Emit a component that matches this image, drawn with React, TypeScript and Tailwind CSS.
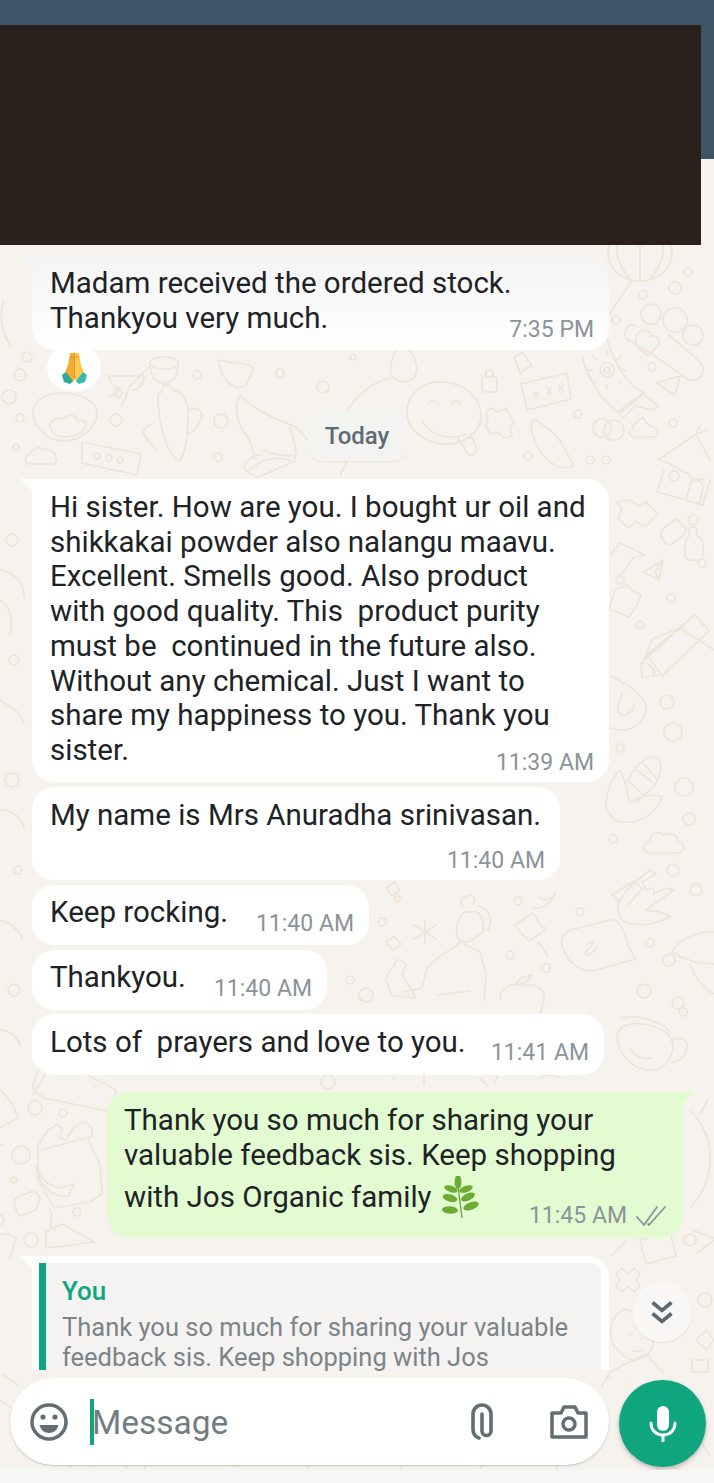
import type { ReactNode } from "react";

const dots: [number, number, number][] = [
  [643, 295, 4], [675, 288, 6], [688, 272, 4], [616, 320, 4], [651, 314, 10], [675, 320, 12], [693, 335, 10],
  [652, 367, 4], [673, 423, 4], [606, 460, 4], [614, 430, 10], [20, 375, 6], [27, 357, 5], [9, 397, 7], [20, 418, 4],
  [118, 393, 4], [197, 375, 4], [116, 420, 6], [221, 421, 7], [16, 447, 3], [218, 457, 4], [353, 357, 3], [280, 373, 4],
  [323, 387, 6], [578, 414, 4], [602, 428, 9], [528, 456, 4], [590, 460, 4], [620, 748, 4], [667, 702, 7],
  [673, 732, 9], [684, 787, 9], [689, 819, 6], [613, 839, 4], [673, 870, 6], [696, 890, 6], [650, 943, 4], [669, 960, 6],
  [644, 991, 7], [678, 1003, 6], [518, 901, 4], [580, 912, 4], [382, 922, 4], [510, 955, 4], [546, 968, 4],
  [350, 980, 4], [366, 995, 7], [35, 1108, 7], [63, 1113, 4], [21, 1155, 9],
  [77, 1212, 4], [31, 1240, 7], [14, 1180, 3], [683, 1012, 4], [693, 520, 5],
  [620, 580, 4], [702, 563, 4], [640, 625, 4], [671, 598, 4], [12, 540, 6], [14, 660, 5], [12, 780, 7],
  [18, 870, 4], [14, 990, 6], [690, 1240, 6], [705, 1300, 7], [328, 1082, 7],
];

function Doodles() {
  return (
    <svg className="absolute inset-0 h-full w-full" viewBox="0 0 714 1483" fill="none" stroke="#eee4d8" strokeWidth="1.7" strokeLinecap="round" strokeLinejoin="round">
      {dots.map((d, i) => (
        <circle key={i} cx={d[0]} cy={d[1]} r={d[2]} />
      ))}

      {/* lantern, capsule and heart */}
      <ellipse cx="640" cy="254" rx="32" ry="27" />
      <path d="M618 235c-4 16 0 30 12 44M640 228v52M662 235c4 16 0 30-12 44M632 281l-18 26-6 10" />
      <path d="M636 326c-10-4-14 8-8 14l24 14 34 24c14 8 24-8 12-18l-30-26" />
      <path d="M640 332c6-4 11 0 11 4 6-2 10 4 7 10l-10 10-10-8c-4-6-3-14 2-16z" />
      {/* sun and brush */}
      <path d="M607 340c10 28 22 48 37 52l-26 20c-12-8-30-30-36-56" />
      <circle cx="607" cy="370" r="7" /><circle cx="607" cy="370" r="3" />
      <path d="M607 355v-4M607 385v4M592 370h-4M622 370h4M596 359l-3-3M618 381l3 3M618 359l3-3M596 381l-3 3" />
      <path d="M619 414l24-20 16 12-6 4-18-4-12 12z" />
      {/* triangle, swirl, house */}
      <path d="M656 383l24-7-5 19z" />
      <path d="M643 417c-6 6-10 6-10 12-6 1-4 8 2 8h18c6 0 7-8 0-10-4-2-8-4-10-10z" />
      <path d="M658 460l38-26 14 26M664 470l-7 22 46 13 7-25M660 460c4 4 8 0 10 4s8 2 10 6 8 0 10 6 8 2 14 4" />
      <circle cx="674" cy="476" r="5" /><path d="M686 500l5-18c6-4 12 0 12 6l-4 18" />
      <path d="M697 433c0-4 2-6 4-8M697 433c4 0 8-2 10-4" />
      <path d="M628 500l12 5 6-3 12 12-12 12-10-4-8 6-10-10 4-10-6-6z" />
      <path d="M664 528l10-8c4-2 6 2 6 4l4 2c4 4 2 6-2 10l-10 8c-6 2-8-2-10-6-2-2-2-6 2-10z" />
      <path d="M689 530c0-4 8-4 8 0v6c4 2 6 4 6 8v12c0 6-18 6-18 0v-12c0-4 2-6 4-8z" />
      <path d="M655 572l8-12-4 20z M644 572l19-12M644 572l15 8" />
      <path d="M615 590l12-5 6 6 8 4-4 10-8 12-20-8z" />
      <path d="M650 640l30-12 34 22M652 640l-8 20M680 628l-36 32" />
      <path d="M610 555l10-12 25 12-12 3-14 20" />
      {/* pencil, flame, corn */}
      <path d="M642 677l-1-14 6-8 48-40 14 16-46 44zM641 663c6 0 16 4 12 14M647 655l16 22" />
      <path d="M610 676c14 6 28 14 36 28 2 14-10 26-24 26-6 0-14-2-18-6M622 692c0 8-6 12-4 20 6 6 16 0 16-8" />
      <path d="M628 780l8-14 14-10 8 2c6 8 2 22-8 32l-14 12M634 768l18 14M642 762l14 16M628 780l16 16" />
      <path d="M620 770c-10 10-14 24-14 38l8 12 8 2c18 2 34-8 40-26-12-2-22 0-32 6-4-12-4-22-10-32z" />
      {/* cloud and rock hand */}
      <path d="M650 853c-8 0-8-10 0-12 0-8 10-10 14-6 6-4 14 0 14 6 8 2 8 12-2 12z" />
      <path d="M650 870c-8 6-22 16-30 30-6 12 0 24 14 24 14 2 28-2 36-8l-10-4-14-2 28-20-8-2-12 6 0-6-8 2-4-8 14-8z" />
      {/* taco, cup, note */}
      <path d="M672 952c8-14 24-20 42-20M672 952c12 8 28 12 42 12M690 964c6 14 12 24 24 30" />
      <path d="M617 1038c0-12 12-16 26-14 16 2 30 10 30 22 0 14-12 26-26 24-14-2-28-14-30-32z" />
      <path d="M622 1018c10-4 40 2 48 14M673 1040c8-4 16 0 14 8-2 10-8 14-16 14" />
      <path d="M630 1048c6 10 14 12 22 10" />
      <path d="M562 945c-2-8 4-14 12-16l40-10c8 4 12 18 14 26l8 14-44 12c-16 0-26-12-30-26z" />
      <path d="M586 945c6-6 8-2 6 0s-8 8-6 10 6-2 12-8" />
      {/* pin, apple, girl, asterisk */}
      <path d="M515 925l18-12 4 4c0 6 4 10 10 12l-18 12-6-6z M538 942l10 14" />
      <path d="M500 998c0-10 10-16 22-12 12-4 22 2 22 12 0 8-4 16-8 20M516 985c2-4 4-8 8-8 2 0 8-2 8-2-2 4-6 8-14 10" />
      <path d="M465 912c-6 4-10 14-8 24 2 6 8 6 12 6l14-10c2-6 0-16-6-20zM463 906c-4-4-2-10 4-8 2-6 10-2 6 6M478 906c10 2 16 12 10 24" />
      <path d="M460 942c-8 10-30 16-34 30l-4 16-20 4M464 944l16 8 6 22-2 26M438 995l32-4" />
      <path d="M425 920v24M414 925l22 14M414 939l22-14" />
      <path d="M386 888l8-6 6 8-8 6zM394 898l4-3 3 4-4 3zM386 942l8-6 7 8-8 6z" />
      <path d="M396 960c-2 8-8 12-10 20l6 16 24 2-14-24 2-6c4-2 2-8-8-8z" />
      <path d="M539 897c6 6 14 2 16-4-2 10-14 18-22 14" />
      <path d="M400 1058c-4 8-8 14-6 22M424 1070v14M480 1078l8 8M500 1070l-6 14M540 1078c6-4 14-4 20 0" />
      <path d="M612 895l22-14 8 8-14 16M620 902l-8-8" />
      {/* band of doodles around Today */}
      <path d="M120 388c-6 0-10-6-12-12h36c0 8-6 14-12 14M120 388l-4 6-6 3" />
      <ellipse cx="164" cy="363" rx="14" ry="6" /><path d="M150 363c0 10 4 20 14 20s14-8 14-20M150 366l-20 20-8 20" />
      <path d="M218 360l4 14 6 8 8 6 10-2 8-18-8-4-16-2zM240 395c8 10 30 22 56 32l22 24" />
      <path d="M240 395c-6 12-4 26 6 40 6 8 8 16 8 24M290 427c4 14 8 24 4 34-12 6-30 14-38 16l-12-8c0-8 10-14 16-14M262 450c10 4 18 6 30 6" />
      <path d="M33 413c0-14 14-20 30-20s34 8 34 20c0 14-16 28-33 28s-31-14-31-28z" />
      <path d="M50 425c2-6 8-8 14-6 6-6 12-4 14 2 4-2 8 0 8 4 0 6-10 12-22 12-8 0-14-6-14-12z" />
      <path d="M158 395c4-4 6-6 6-12 4 2 8 4 10 8 8 0 14 8 14 22 0 20-2 38-8 48-6-2-10-8-14-18-6-16-8-36-8-48z" />
      <path d="M190 410c6-4 12 0 12 6-2 8-6 14-14 18M152 425c-6 0-10 6-8 10 4 6 10 12 14 16" />
      <path d="M82 442l59 12-4 21-55-12z" />
      <circle cx="97" cy="456" r="3" /><circle cx="109" cy="458" r="3" /><circle cx="120" cy="460" r="3" />
      <path d="M30 464c-6 0-6-8 0-10 2-6 10-8 14-4 6-2 12 2 12 8 2 4-2 6-6 6z" />
      <path d="M407 412c0-18 16-32 38-30 20 2 36 16 36 34 0 18-18 28-34 28-22 0-40-14-40-32z" />
      <path d="M429 404a5 5 0 0 1 9 0M452 404a5 5 0 0 1 9 0M422 420c6 14 26 22 44 14M458 438l10 16c6 4 10-2 8-8l-6-12" />
      <path d="M521 384l46-11 4 26-44 11z" />
      <path d="M534 392l4 6M538 392l-4 6M547 388l4 6M551 388l-4 6M559 385l4 6M563 385l-4 6" />
      <rect x="482" y="377" width="15" height="15" rx="3" /><path d="M486 377v-4c0-4 7-4 7 0v4" />
      <path d="M514 358l8-6 6 8 4 6-6 2-6 6-2-8z" />
      <path d="M490 408l8 4 8-4 4 8 4 6-4 6 2 8-8 2-6-6-8 2-4-8 2-6-2-6z" />
      <path d="M534 420c8 2 24 16 28 24l12 22-8 2c-14 0-30-16-34-36-2-8 0-12 2-12z" />
      <path d="M400 340c8 8 20 20 16 34-4 10-18 10-24 2-4-8 0-18 8-36zM344 420c6-20 24-36 46-42M330 455l26-10-16 30" />
      <path d="M250 470c10-10 24-14 40-10" />
      {/* lower left */}
      <path d="M38 1070l40 0 38 20-4 22-68-14-12-10zM45 1075l-12 20M100 1082h1M94 1086h1" />
      <path d="M48 1130l10-6 4 6-2 6c0 4 6 6 8 0l4-6c8-10 14-8 18-4 4 4 2 10-2 14l12 24 2 30-12 8-36 6-16-28 0-34z" />
      <path d="M42 1150l50-14" />
      <path d="M36 1166c2 16 14 32 32 30l6-12-14 4c-12-2-20-10-24-22z" />
      <path d="M16 1198l14-6c6-2 8 2 10 6l-4 12-16 6c-4-2-4-6-4-8-2-4-2-8 0-10z" />
      <path d="M50 1208l2 10-2 8 6 4" />
      <path d="M46 1232l16-8 32 18-30 4-18 2z M0 1234c8 0 14 2 16 4l-6 20" />
      <path d="M0 1090c8 6 14 16 18 28l-18 10M0 1145l4 0M0 1215c6 2 4 8 0 10" />
      <path d="M4 300c-6 16-2 30 6 46M0 570c14 2 24 12 24 28M0 600c10 6 14 20 10 34M0 700c8 6 20 10 24 24M0 810c10 0 22 6 24 18M0 920c8 2 18 8 22 18M0 1030c8 0 18 6 20 16" />
      {/* lower right */}
      <path d="M622 1268l6 6 6-6 6 6-4 6 4 6-6 6-6-6-6 6-6-6 4-6-4-6z" />
      <path d="M622 1310c-12 8-14 24-8 36l6 6c8 10 20 10 28 2 8-8 6-22-2-32-6-8-16-14-24-12z" />
      <path d="M630 1336l2-2M640 1340l2-2M632 1350c4 2 8 2 10 0" />
      <path d="M610 1372l36-18 18 20M602 1386l8-14" />
      <path d="M696 1340l10-10 8 10-8 10zM692 1360h16v12h-16z" />
      <path d="M640 1240l30-8 6 24-30 8zM696 1254l18-14M612 1255l14-14" />
      <path d="M690 1110c14 14 22 34 20 54-2 18-10 34-20 44M708 1100l-8 14M692 1230l22 8" />
      <path d="M610 1376l-6 6M650 1456l8 14M30 1440l12 10 6-10 6 18-12-4zM70 1466c8-6 18-6 24 0M126 1468l4-10M150 1460l-6 10M236 1466l14-8M308 1468l6-10M400 1460l2 10M480 1468l10-8M560 1460l-4 10M660 1460l20 10M700 1440l10 16M0 1400l14 10M4 1375l14 10" />
    </svg>
  );
}

function PrayEmoji() {
  return (
    <svg viewBox="0 0 25 31" className="h-[31px] w-[25px]">
      <path d="M12.500 0H8L6.500 10 3 20l7 10 2.500-4z" fill="#f3ad2f" />
      <path d="M12.500 0H17l1.500 10L22 20l-7 10-2.500-4z" fill="#fdc94f" />
      <path d="M0 22l4-3 7 9-3 3-6-2z" fill="#2aa99b" />
      <path d="M25 22l-4-3-7 9 3 3 6-2z" fill="#35bcae" />
      <path d="M12.500 0v26" stroke="#d98d1c" strokeWidth="0.8" />
      <path d="M8 4h9" stroke="#d98d1c" strokeWidth="0.8" />
    </svg>
  );
}

function LeafEmoji() {
  return (
    <svg viewBox="0 0 37 43" className="h-[43px] w-[37px]">
      <path d="M16 10l4 32" stroke="#6a9c3a" strokeWidth="1.3" fill="none" />
      <g fill="#6cab34">
        <ellipse cx="16" cy="6" rx="3.500" ry="7" />
        <ellipse cx="9" cy="13" rx="7" ry="3.200" transform="rotate(18 9 13)" />
        <ellipse cx="24" cy="13" rx="7" ry="3.200" transform="rotate(-20 24 13)" />
        <ellipse cx="8" cy="22" rx="7.500" ry="3.600" transform="rotate(16 8 22)" />
        <ellipse cx="26" cy="21" rx="7.500" ry="3.600" transform="rotate(-26 26 21)" />
        <ellipse cx="8" cy="34" rx="8" ry="3.800" transform="rotate(4 8 34)" />
        <ellipse cx="29" cy="30" rx="8" ry="3.800" transform="rotate(-20 29 30)" />
      </g>
    </svg>
  );
}

function Time({ children }: { children: ReactNode }) {
  return <span className="shrink-0 whitespace-nowrap text-[23px] leading-[26px] text-[#8b9499]">{children}</span>;
}

function Tail() {
  return <span className="absolute left-[-12px] top-0 h-0 w-0 border-l-[16px] border-t-[16px] border-l-transparent border-t-white" />;
}

function Text({ children }: { children: ReactNode }) {
  return <p className="whitespace-pre text-[29.5px] leading-[34.7px] text-[#1d2326]">{children}</p>;
}

export default function App() {
  return (
    <div className="relative flex h-[1483px] w-[714px] flex-col overflow-hidden bg-[#f6f2ed] font-['Roboto',sans-serif]">
      <Doodles />

      {/* redacted header */}
      <div className="relative h-[256px] shrink-0">
        <div className="h-[159px] bg-[#3e5565]" />
        <div className="absolute left-0 top-[25px] h-[220px] w-[701px] bg-[#2c201c]" />
      </div>

      {/* messages */}
      <div className="relative flex h-[1114px] shrink-0 flex-col">
        <div className="relative ml-[32px] h-[94px] w-[577px] rounded-[22px] rounded-tl-none bg-gradient-to-b from-[#f4f4f4] to-white pl-[18px] pr-[15px] pt-[10px]">
          <span className="absolute left-[-12px] top-0 h-0 w-0 border-l-[16px] border-t-[16px] border-l-transparent border-t-[#f4f4f4]" />
          <Text>Madam received the ordered stock.</Text>
          <div className="flex items-start justify-between">
            <Text>Thankyou very much.</Text>
            <span className="mt-[16px]"><Time>7:35 PM</Time></span>
          </div>
          <span className="absolute left-[15px] top-[89px] flex h-[46px] w-[54px] items-center justify-center rounded-full bg-white">
            <PrayEmoji />
          </span>
        </div>

        <div className="mt-[61px] flex h-[50px] w-[99px] items-center justify-center self-center rounded-[14px] bg-[#f3f3f2] text-[24px] font-medium text-[#5f6b72] shadow-[0_1px_1px_rgba(0,0,0,0.05)]">
          Today
        </div>

        <div className="relative ml-[32px] mt-[18px] h-[303px] w-[577px] rounded-[22px] rounded-tl-none bg-white pl-[18px] pr-[15px] pt-[11px]">
          <Tail />
          <Text>
            {"Hi sister. How are you. I bought ur oil and\nshikkakai powder also nalangu maavu.\nExcellent. Smells good. Also product\nwith good quality. This  product purity\nmust be  continued in the future also.\nWithout any chemical. Just I want to\nshare my happiness to you. Thank you"}
          </Text>
          <div className="flex items-start justify-between">
            <Text>sister.</Text>
            <span className="mt-[17px]"><Time>11:39 AM</Time></span>
          </div>
        </div>

        <div className="ml-[32px] mt-[5px] flex h-[93px] w-[528px] flex-col rounded-[22px] bg-white pb-[6px] pl-[18px] pr-[15px] pt-[11px]">
          <Text>My name is Mrs Anuradha srinivasan.</Text>
          <div className="mt-[15px] self-end"><Time>11:40 AM</Time></div>
        </div>

        <div className="ml-[32px] mt-[5px] flex h-[60px] w-[337px] items-end justify-between rounded-[22px] bg-white pb-[8px] pl-[18px] pr-[15px] pt-[10px]">
          <div className="self-start"><Text>Keep rocking.</Text></div>
          <Time>11:40 AM</Time>
        </div>

        <div className="ml-[32px] mt-[5px] flex h-[60px] w-[295px] items-end justify-between rounded-[22px] bg-white pb-[8px] pl-[18px] pr-[15px] pt-[10px]">
          <div className="self-start"><Text>Thankyou.</Text></div>
          <Time>11:40 AM</Time>
        </div>

        <div className="ml-[32px] mt-[4px] flex h-[61px] w-[572px] items-end justify-between rounded-[22px] bg-white pb-[9px] pl-[18px] pr-[15px] pt-[11px]">
          <div className="self-start"><Text>Lots of  prayers and love to you.</Text></div>
          <Time>11:41 AM</Time>
        </div>

        {/* outgoing */}
        <div className="relative ml-[107px] mt-[17px] h-[146px] w-[576px] shrink-0 rounded-[22px] rounded-tr-none bg-[#e2fbd1] pl-[17px] pt-[11px]">
          <span className="absolute right-[-12px] top-0 h-0 w-0 border-r-[16px] border-t-[16px] border-r-transparent border-t-[#e2fbd1]" />
          <Text>{"Thank you so much for sharing your\nvaluable feedback sis. Keep shopping"}</Text>
          <div className="flex h-[57px] items-start pr-[16px]">
            <span className="mt-[8px]"><Text>with Jos Organic family</Text></span>
            <span className="ml-[10px] mt-[4px]"><LeafEmoji /></span>
            <span className="ml-auto flex items-center gap-[8px] self-end">
              <Time>11:45 AM</Time>
              <svg viewBox="0 0 32 22" className="h-[22px] w-[32px]" fill="none" stroke="#8b9499" strokeWidth="1.8" strokeLinecap="round" strokeLinejoin="round">
                <path d="M2 12l7 8L22 2M13 19l1 1L30 2" />
              </svg>
            </span>
          </div>
        </div>

        {/* quoted reply, ends flat at the input bar */}
        <div className="relative ml-[32px] mt-[18px] h-[114px] w-[577px] shrink-0 rounded-tr-[22px] bg-white pl-[7px] pr-[8px] pt-[7px]">
          <Tail />
          <div className="h-[107px] rounded-tr-[10px] border-l-[7px] border-[#0fa67f] bg-[#f5f3f1] pl-[16px] pt-[10px]">
            <p className="text-[26px] font-medium leading-[36px] text-[#0fa67f]">You</p>
            <p className="mt-[5px] whitespace-pre text-[25.5px] leading-[26px] text-[#7b8489]">Thank you so much for sharing your valuable</p>
            <p className="mt-[4px] whitespace-pre text-[25.5px] leading-[26px] text-[#7b8489]">feedback sis. Keep shopping with Jos</p>
          </div>
        </div>

        <button className="absolute left-[632px] top-[1026px] flex h-[60px] w-[60px] items-center justify-center rounded-full bg-[#f8f7f5] shadow-[0_1px_2px_rgba(0,0,0,0.08)]">
          <svg viewBox="0 0 22 23" className="h-[23px] w-[22px]" fill="none" stroke="#5d686e" strokeWidth="3.6" strokeLinejoin="miter">
            <path d="M1.500 1.500L11 9.500l9.500-8M1.500 12.500L11 20.500l9.500-8" />
          </svg>
        </button>
      </div>

      {/* input row */}
      <div className="relative mt-[8px] flex items-start pl-[10px]">
        <div className="flex h-[87px] w-[599px] items-center rounded-[44px] bg-white pl-[20px] pr-[21px] shadow-[0_1px_2px_rgba(0,0,0,0.2)]">
          <svg viewBox="0 0 38 38" className="h-[38px] w-[38px]" fill="none" stroke="#636e73" strokeWidth="3.5">
            <circle cx="19" cy="19" r="17" />
            <circle cx="13" cy="14" r="2.600" fill="#636e73" stroke="none" />
            <circle cx="25" cy="14" r="2.600" fill="#636e73" stroke="none" />
            <path d="M9.500 22h19c-1 5-5 8-9.500 8s-8.500-3-9.500-8z" fill="#636e73" stroke="none" />
          </svg>
          <span className="ml-[22px] h-[46px] w-[4px] bg-[#0fa67f]" />
          <span className="ml-[-2px] mt-[3px] text-[33.5px] text-[#737d81]">Message</span>
          <svg viewBox="0 0 24 38" className="ml-auto h-[38px] w-[24px]" fill="none" stroke="#636e73" strokeWidth="3.6" strokeLinecap="round">
            <path d="M12 11v17a4.500 4.500 0 0 0 9 0V11a9 9 0 0 0-18 0v15a9.500 9.500 0 0 0 6 9" />
          </svg>
          <svg viewBox="0 0 38 34" className="ml-[56px] h-[34px] w-[38px]" fill="none" stroke="#636e73" strokeWidth="3.5" strokeLinejoin="round">
            <path d="M2 8h9l3-6h11l3 6h8v24H2z" />
            <circle cx="19" cy="19" r="6" />
          </svg>
        </div>
        <div className="ml-[10px] mt-[2px] flex h-[87px] w-[87px] items-center justify-center rounded-full bg-[#0fa67f] shadow-[0_2px_4px_rgba(0,0,0,0.25)]">
          <svg viewBox="0 0 28 36" className="h-[36px] w-[28px]" fill="none" stroke="#fff" strokeWidth="3" strokeLinecap="round">
            <rect x="8" y="0" width="12" height="25" rx="6" fill="#fff" stroke="none" />
            <path d="M2 17c0 7 5 12 12 12s12-5 12-12M14 29v6" />
          </svg>
        </div>
      </div>

      <div className="absolute bottom-0 left-0 h-[13px] w-full bg-[#f5f6f8]" />
    </div>
  );
}
